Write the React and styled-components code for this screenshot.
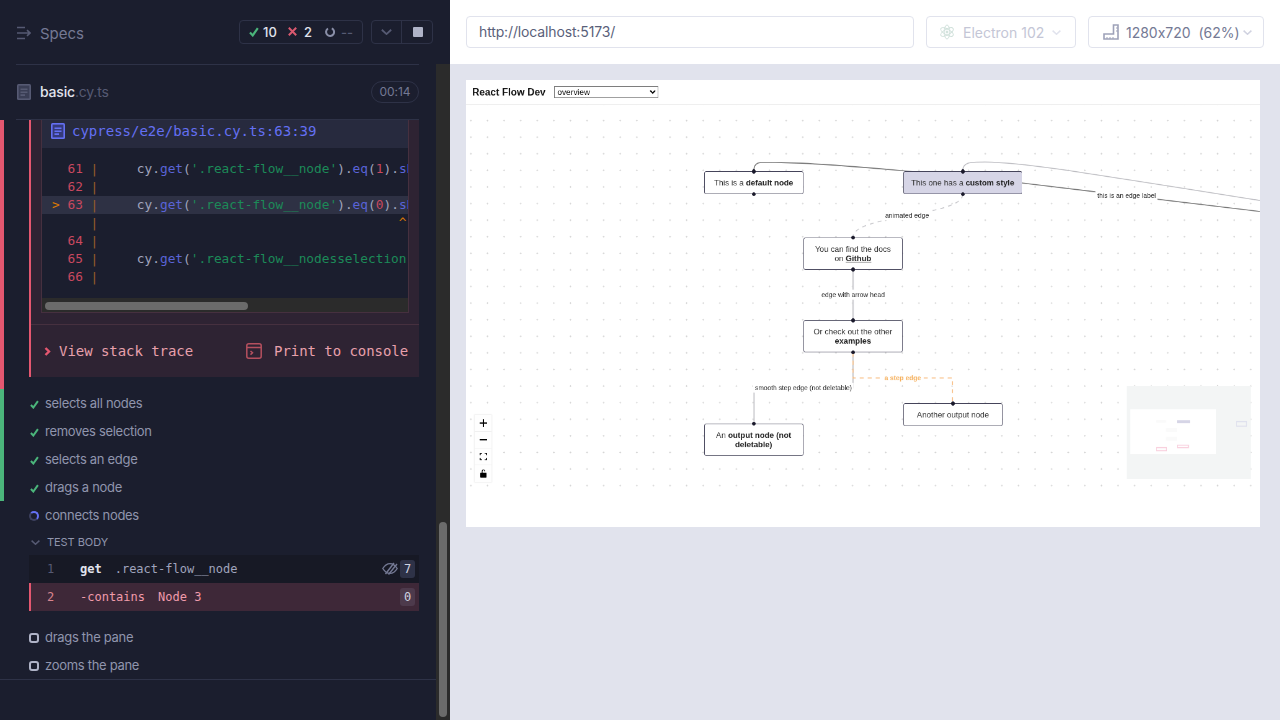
import React from 'react'
import styled, { createGlobalStyle } from 'styled-components'

const Global = createGlobalStyle`
	html, body { margin: 0; padding: 0; height: 100%; background: #1b1e2e; }
	* { box-sizing: border-box; }
	body { font-family: Inter, 'Noto Sans', sans-serif; font-feature-settings: 'calt' 0; overflow: hidden; }
`

const mono = `'DejaVu Sans Mono', 'Liberation Mono', monospace`
const line = '#2e3247'

const Shell = styled.div`
	display: flex;
	width: 1280px;
	height: 720px;
	overflow: hidden;
`

/* ---------- reporter (left) ---------- */
const Reporter = styled.aside`
	display: flex;
	flex-direction: column;
	width: 450px;
	height: 720px;
	background: #1b1e2e;
`
const TopBar = styled.header`
	display: flex;
	align-items: center;
	height: 64px;
	padding: 0 17px 0 17px;
	flex: none;
`
const SpecsLabel = styled.div`
	display: flex;
	align-items: center;
	gap: 9px;
	color: #747994;
	font-size: 15px;
	margin-right: auto;
	padding-top: 2px;
`
const Stats = styled.div`
	display: flex;
	align-items: center;
	height: 24px;
	width: 124px;
	padding-left: 9px;
	border: 1px solid ${line};
	border-radius: 4px;
	margin-right: 8px;
	margin-top: -1px;
	color: #e1e3ed;
	font-size: 13px;
	font-weight: 500;
`
const Stat = styled.span`
	display: flex;
	align-items: center;
	gap: ${p => p.$gap || 4}px;
	width: ${p => p.$w}px;
	color: ${p => p.$dim ? '#565a73' : 'inherit'};
`
const Controls = styled.div`
	display: flex;
	height: 24px;
	width: 62px;
	border: 1px solid ${line};
	border-radius: 4px;
	margin-top: -1px;
`
const ControlCell = styled.div`
	flex: 1;
	display: flex;
	align-items: center;
	justify-content: center;
	& + & { border-left: 1px solid ${line}; padding-left: 2px; }
`
const StopSquare = styled.div`
	width: 10px;
	height: 10px;
	border-radius: 1px;
	background: #afb3c7;
`
const Split = styled.div`
	flex: 1;
	display: flex;
	min-height: 0;
`
const Main = styled.div`
	width: 436px;
	display: flex;
	flex-direction: column;
`
const SpecRow = styled.div`
	display: flex;
	align-items: center;
	height: 56px;
	margin: 0 17px 0 16px;
	padding: 0 0 1px 1px;
	border-top: 1px solid ${line};
	border-bottom: 1px solid ${line};
	flex: none;
`
const SpecName = styled.div`
	margin-left: 9px;
	margin-right: auto;
	font-size: 14px;
	font-weight: 500;
	letter-spacing: -0.2px;
	color: #e1e3ed;
	span { color: #565a73; font-weight: 400; }
`
const Duration = styled.div`
	width: 48px;
	height: 22px;
	line-height: 20px;
	text-align: center;
	border: 1px solid ${line};
	border-radius: 11px;
	font-size: 12px;
	color: #747994;
`
const Group = styled.div`
	border-left: 4px solid ${p => p.$color};
	padding-left: 25px;
	padding-right: 17px;
`
const ErrorBlock = styled.div`
	width: 390px;
	height: 257px;
	margin-bottom: 12px;
	background: #2e2333;
	border-left: 2px solid #e45770;
	padding-left: 10px;
`
const Frame = styled.div`
	width: 368px;
	height: 193px;
	border: 1px solid #46303f;
	border-top: none;
	background: #1b1e2e;
	overflow: hidden;
`
const FrameHead = styled.div`
	display: flex;
	align-items: center;
	gap: 7px;
	height: 28px;
	padding: 0 0 6px 9px;
	background: #272a3e;
	color: #6470f3;
	font: 14px ${mono};
`
const Code = styled.div`
	height: 150px;
	padding: 12px 0;
	font: 12.8px/18px ${mono};
`
const Line = styled.div`
	height: 18px;
	padding-left: 10px;
	white-space: pre;
	color: #a0a4bd;
	background: ${p => p.$active ? '#2e3144' : 'transparent'};
`
const Tok = styled.span`
	color: ${p => ({ arrow: '#db7903', num: '#c9485f', pipe: '#9a5f2a', fn: '#5a64d8', str: '#1c8a58', lit: '#c9485f' }[p.$k])};
`
const HScroll = styled.div`
	height: 14px;
	padding: 4px 3px;
	background: #2b2b2b;
`
const HThumb = styled.div`
	width: 203px;
	height: 8px;
	border-radius: 4px;
	background: #6b6b6b;
`
const ErrorFoot = styled.div`
	display: flex;
	align-items: center;
	height: 53px;
	margin: 11px 0 0 -10px;
	padding: 0 0 0 13px;
	border-top: 1px solid #46303f;
	color: #e8a0ac;
	font: 14px ${mono};
	letter-spacing: -0.05px;
	white-space: nowrap;
`
const FootText = styled.span`
	margin-left: ${p => p.$m}px;
`
const FootSpacer = styled.div`
	width: 53px;
`
const TestRow = styled.div`
	display: flex;
	align-items: center;
	gap: 6px;
	height: 28px;
	padding-bottom: 1px;
	font-size: 13px;
	letter-spacing: -0.3px;
	color: #9095ad;
`
const IconBox = styled.span`
	display: flex;
	align-items: center;
	justify-content: center;
	width: 10px;
	height: 10px;
	flex: none;
	margin-top: 3px;
`
const Pending = styled.span`
	width: 10px;
	height: 10px;
	flex: none;
	margin-top: 3px;
	border: 2px solid #afb3c7;
	border-radius: 3px;
	background: #1b1e2e;
`
const Spinner = styled.span`
	width: 10px;
	height: 10px;
	flex: none;
	margin-top: 2px;
	border-radius: 50%;
	border: 2px solid #3d4160;
	border-top-color: #6470f3;
	border-right-color: #6470f3;
`
const BodyTitle = styled.div`
	display: flex;
	align-items: center;
	gap: 7px;
	height: 26px;
	padding-left: 2px;
	font-size: 11px;
	letter-spacing: -0.05px;
	color: #9095ad;
`
const Command = styled.div`
	display: flex;
	align-items: center;
	height: 28px;
	width: 390px;
	padding-right: 4px;
	padding-left: ${p => p.$failed ? 16 : 18}px;
	padding-bottom: 1px;
	border-left: ${p => p.$failed ? '2px solid #e45770' : 'none'};
	background: ${p => p.$failed ? '#3e2838' : '#171925'};
	font: 12px ${mono};
	white-space: pre;
	color: ${p => p.$failed ? '#f19bab' : '#a0a4bd'};
`
const CmdNum = styled.span`
	width: 33px;
	color: ${p => p.$failed ? '#d9848f' : '#565a73'};
`
const CmdName = styled.span`
	font-weight: 700;
	color: #e1e3ed;
	margin-right: 13px;
`
const CmdFail = styled.span`
	color: #f19bab;
	margin-right: 13px;
`
const Count = styled.span`
	display: flex;
	align-items: center;
	justify-content: center;
	width: 15px;
	height: 18px;
	margin-left: ${p => p.$auto ? 'auto' : '2px'};
	border-radius: 3px;
	background: ${p => p.$failed ? '#4d3a4c' : line};
	color: #d0d2e0;
`
const EyeWrap = styled.span`
	display: flex;
	margin-left: auto;
`
const AfterBody = styled.div`
	height: 12px;
`
const RunnerEnd = styled.div`
	height: 1px;
	background: ${line};
`
const Track = styled.div`
	width: 14px;
	display: flex;
	align-items: flex-end;
	justify-content: center;
	padding: 0 0 3px;
	background: #2b2b2b;
`
const Thumb = styled.div`
	width: 8px;
	height: 195px;
	border-radius: 4px;
	background: #6b6b6b;
`

/* ---------- preview (right) ---------- */
const Preview = styled.section`
	flex: 1;
	display: flex;
	flex-direction: column;
	background: #e1e3ed;
`
const UrlBar = styled.div`
	display: flex;
	gap: 12px;
	height: 64px;
	padding: 16px;
	background: #fff;
`
const UrlInput = styled.div`
	width: 448px;
	height: 32px;
	line-height: 30px;
	padding-left: 12px;
	border: 1px solid #e1e3ed;
	border-radius: 4px;
	font-size: 14px;
	letter-spacing: -0.14px;
	color: #5a5f7a;
`
const Picker = styled.div`
	display: flex;
	align-items: center;
	width: ${p => p.$w}px;
	height: 32px;
	padding-left: ${p => p.$pad}px;
	gap: ${p => p.$gap}px;
	border: 1px solid #e1e3ed;
	border-radius: 4px;
	font-size: 14px;
	color: ${p => p.$muted ? '#c4c6d6' : '#747994'};
	white-space: pre;
`
const Stage = styled.div`
	padding: 16px;
`
const AutBox = styled.div`
	width: 794px;
	height: 447px;
	background: #fff;
	overflow: hidden;
`
const Aut = styled.div`
	width: 1280px;
	height: 720px;
	transform: scale(0.6203);
	transform-origin: 0 0;
	will-change: transform;
	font-family: 'Liberation Sans', Arial, sans-serif;
	color: #222;
`
const AutHeader = styled.div`
	display: flex;
	align-items: center;
	height: 40px;
	padding-left: 10px;
	border-bottom: 1px solid #eee;
	font-size: 16px;
	font-weight: 700;
	color: #111;
	select {
		width: 168px;
		height: 19px;
		margin-left: 14px;
		font: 13.33px 'Liberation Sans', Arial, sans-serif;
		background: #fff;
	}
`
const Flow = styled.div`
	position: relative;
	width: 1280px;
	height: 618px;
	overflow: hidden;
	background-image: radial-gradient(circle at center, #d4d4d4 1px, transparent 1.1px);
	background-size: 26.75px 26.75px;
	background-position: -5.5px 12px;
`
const EdgeLayer = styled.svg`
	position: absolute;
	inset: 0;
	width: 1280px;
	height: 618px;
`
const Node = styled.div`
	position: absolute;
	left: ${p => p.$x}px;
	top: ${p => p.$y}px;
	width: ${p => p.$w || 160}px;
	padding: 10px;
	border: 1px solid #45445a;
	border-radius: 3px;
	background: ${p => p.$bg || '#fff'};
	font-size: 12.84px;
	line-height: 15px;
	text-align: center;
	color: #333;
	a { color: #222; font-weight: 700; }
	strong { color: #222; }
`
const Handle = styled.span`
	position: absolute;
	left: 50%;
	${p => p.$side}: -4px;
	width: 6.4px;
	height: 6.4px;
	margin-left: -3.2px;
	border-radius: 50%;
	background: #1a192b;
	border: 1px solid #1a192b;
`
const EdgeLabel = styled.div`
	position: absolute;
	left: ${p => p.$x}px;
	top: ${p => p.$y}px;
	transform: translate(-50%, -50%);
	padding: 2px 3px;
	background: #fff;
	font-size: 10.7px;
	line-height: 12px;
	white-space: nowrap;
	color: ${p => p.$color || '#222'};
	font-weight: ${p => p.$color ? 700 : 400};
`
const ZoomControls = styled.div`
	position: absolute;
	left: 14px;
	bottom: 10px;
	width: 27px;
	box-shadow: 0 0 2px 1px rgba(0, 0, 0, 0.08);
`
const ZoomButton = styled.div`
	display: flex;
	align-items: center;
	justify-content: center;
	height: 27px;
	background: #fefefe;
	border-bottom: 1px solid #eee;
	&:last-child { border-bottom: none; }
`
const MiniMap = styled.svg`
	position: absolute;
	right: 15px;
	bottom: 15px;
	width: 200px;
	height: 150px;
`

/* ---------- icons ---------- */
const SpecsIcon = () => (
	<svg width="14" height="14" viewBox="0 0 14 14" fill="none" stroke="#565a73" strokeWidth="1.6">
		<path d="M0 1.5h8M0 7h12.5M0 12.5h8M10 4.2 13 7l-3 2.8" />
	</svg>
)
const DocIcon = ({ color = '#565a73', ink = '#3a3e55' }) => (
	<svg width="14" height="16" viewBox="0 0 14 16" fill="none">
		<rect width="14" height="16" rx="1.5" fill={color} />
		<rect x="1.6" y="1.6" width="10.8" height="12.8" fill={ink} />
		<path d="M3.5 4.5h7v1.6h-7zM3.5 7.4h7V9h-7zM3.5 10.3h4.5v1.6H3.5z" fill={color} />
	</svg>
)
const Check = ({ size = 10 }) => (
	<svg width={size} height={size} viewBox="0 0 10 10" fill="none" stroke="#4bb57b" strokeWidth="2.2">
		<path d="M1 5.6 3.7 8.4 8.8 1.2" />
	</svg>
)
const Cross = () => (
	<svg width="9" height="9" viewBox="0 0 9 9" fill="none" stroke="#d9596f" strokeWidth="2">
		<path d="M.8.8l7.4 7.4M8.2.8.8 8.2" />
	</svg>
)
const Ring = () => (
	<svg width="10" height="10" viewBox="0 0 10 10" fill="none" stroke="#8a8fa8" strokeWidth="2">
		<path d="M6.8 1.3A4 4 0 1 1 3 1.5" />
	</svg>
)
const Chevron = ({ color, w = 9, h = 5 }) => (
	<svg width={w} height={h} viewBox="0 0 9 5" fill="none" stroke={color} strokeWidth="1.5">
		<path d="M.6.6 4.5 4.2 8.4.6" />
	</svg>
)
const RedArrow = () => (
	<svg width="7" height="9" viewBox="0 0 7 9" fill="none" stroke="#e45770" strokeWidth="2.4">
		<path d="M1.5 1 5 4.5 1.5 8" />
	</svg>
)
const ConsoleIcon = () => (
	<svg width="16" height="16" viewBox="0 0 16 16" fill="none" stroke="#b5505f" strokeWidth="1.5">
		<rect x=".8" y=".8" width="14.4" height="14.4" rx="2" />
		<path d="M.8 4.5h14.4M4.5 8l2 1.8-2 1.8" />
	</svg>
)
const EyeOff = () => (
	<svg width="16" height="13" viewBox="0 0 16 13" fill="none" stroke="#747994" strokeWidth="1.4">
		<path d="M.8 6.5C3 3 5.5 1.6 8 1.6s5 1.4 7.2 4.9C13 10 10.5 11.4 8 11.4S3 10 .8 6.5Z" />
		<path d="M3.5 12 12 1M6.5 12.5 15 2" />
	</svg>
)
const ElectronIcon = () => (
	<svg width="16" height="16" viewBox="0 0 16 16" fill="none" stroke="#cfe0da" strokeWidth="0.9">
		<ellipse cx="8" cy="8" rx="7" ry="2.8" transform="rotate(30 8 8)" />
		<ellipse cx="8" cy="8" rx="7" ry="2.8" transform="rotate(-30 8 8)" />
		<ellipse cx="8" cy="8" rx="2.8" ry="7" />
		<circle cx="8" cy="8" r="1" fill="#cfe0da" />
	</svg>
)
const RulerIcon = () => (
	<svg width="16" height="16" viewBox="0 0 16 16" fill="none" stroke="#9ea2b9" strokeWidth="1.6">
		<path d="M10.5 1h4.5v14H1v-5h9.5Z" />
		<path d="M4 15v-2M7 15v-2M10 15v-2M15 4h-2M15 7h-2" strokeWidth="1" />
	</svg>
)

const LineNum = ({ n, arrow }) => (
	<>
		<Tok $k="arrow">{arrow ? '>' : ' '}</Tok>{' '}
		<Tok $k="num">{n || '  '}</Tok>{' '}
		<Tok $k="pipe">|</Tok>
	</>
)
const GetCall = ({ arg, lit }) => (
	<>
		{'     cy.'}<Tok $k="fn">get</Tok>(<Tok $k="str">{arg}</Tok>)
		{lit && <>.<Tok $k="fn">eq</Tok>(<Tok $k="lit">{lit}</Tok>).<Tok $k="fn">should</Tok></>}
	</>
)

const passed = ['selects all nodes', 'removes selection', 'selects an edge', 'drags a node']

export default function App() {
	return (
		<Shell>
			<Global />
			<Reporter>
				<TopBar>
					<SpecsLabel><SpecsIcon />Specs</SpecsLabel>
					<Stats>
						<Stat $w={39}><Check />10</Stat>
						<Stat $w={37} $gap={7}><Cross />2</Stat>
						<Stat $w={30} $gap={6} $dim><Ring />--</Stat>
					</Stats>
					<Controls>
						<ControlCell><Chevron color="#565a73" w={11} h={6} /></ControlCell>
						<ControlCell><StopSquare /></ControlCell>
					</Controls>
				</TopBar>
				<Split>
					<Main>
						<SpecRow>
							<DocIcon />
							<SpecName>basic<span>.cy.ts</span></SpecName>
							<Duration>00:14</Duration>
						</SpecRow>
						<Group $color="#e45770">
							<ErrorBlock>
								<Frame>
									<FrameHead>
										<DocIcon color="#6470f3" ink="#353a7a" />
										cypress/e2e/basic.cy.ts:63:39
									</FrameHead>
									<Code>
										<Line><LineNum n="61" /><GetCall arg="'.react-flow__node'" lit="1" /></Line>
										<Line><LineNum n="62" /></Line>
										<Line $active><LineNum n="63" arrow /><GetCall arg="'.react-flow__node'" lit="0" /></Line>
										<Line><LineNum />{' '.repeat(39)}<Tok $k="arrow">^</Tok></Line>
										<Line><LineNum n="64" /></Line>
										<Line><LineNum n="65" /><GetCall arg="'.react-flow__nodesselection-rect'" /></Line>
										<Line><LineNum n="66" /></Line>
									</Code>
									<HScroll><HThumb /></HScroll>
								</Frame>
								<ErrorFoot>
									<RedArrow />
									<FootText $m={8}>View stack trace</FootText>
									<FootSpacer />
									<ConsoleIcon />
									<FootText $m={12}>Print to console</FootText>
								</ErrorFoot>
							</ErrorBlock>
						</Group>
						<Group $color="#4bb57b">
							{passed.map(name => (
								<TestRow key={name}><IconBox><Check size={9} /></IconBox>{name}</TestRow>
							))}
						</Group>
						<Group $color="transparent">
							<TestRow><Spinner />connects nodes</TestRow>
							<BodyTitle><Chevron color="#565a73" />TEST BODY</BodyTitle>
							<Command>
								<CmdNum>1</CmdNum>
								<CmdName>get</CmdName>
								.react-flow__node
								<EyeWrap><EyeOff /></EyeWrap>
								<Count>7</Count>
							</Command>
							<Command $failed>
								<CmdNum $failed>2</CmdNum>
								<CmdFail>-contains</CmdFail>
								Node 3
								<Count $auto $failed>0</Count>
							</Command>
							<AfterBody />
							<TestRow><Pending />drags the pane</TestRow>
							<TestRow><Pending />zooms the pane</TestRow>
						</Group>
						<RunnerEnd />
					</Main>
					<Track><Thumb /></Track>
				</Split>
			</Reporter>

			<Preview>
				<UrlBar>
					<UrlInput>http://localhost:5173/</UrlInput>
					<Picker $w={150} $pad={12} $gap={8} $muted>
						<ElectronIcon />Electron 102<Chevron color="#e1e3ed" />
					</Picker>
					<Picker $w={176} $pad={14} $gap={3}>
						<RulerIcon /> 1280x720  (62%)<Chevron color="#d0d2e0" />
					</Picker>
				</UrlBar>
				<Stage>
					<AutBox>
						<Aut>
							<AutHeader>
								React Flow Dev
								<select defaultValue="overview"><option>overview</option></select>
							</AutHeader>
							<Flow>
								<EdgeLayer viewBox="466 104.8 794 383.4" fill="none">
									<path d="M753.8 171C753.8 160 762 162.5 775 162.5C830 162.5 960 176 1022 183L1260 211.5" stroke="#777" strokeWidth="1" />
									<path d="M962.7 171C962.7 162 970 162 985 162C1020 162.5 1050 167 1260 200.5" stroke="#bdbdc2" strokeWidth="1" />
									<path d="M962.7 194.5C962.7 216 853 215 853 237" stroke="#c8c8cc" strokeWidth="1" strokeDasharray="4" />
									<path d="M853 270V320" stroke="#d0d0d4" strokeWidth="1.6" />
									<path d="M853 352.7V388H754V423" stroke="#b8b8bd" strokeWidth="1" />
									<path d="M853 352.7V378H952.5V403" stroke="#f8bd82" strokeWidth="1" strokeDasharray="4" />
								</EdgeLayer>
								<Node $x={383.7} $y={107.2}>
									<Handle $side="top" />
									This is a <strong>default node</strong>
									<Handle $side="bottom" />
								</Node>
								<Node $x={705} $y={107.2} $w={191.5} $bg="#d6d5e6">
									<Handle $side="top" />
									This one has a <strong>custom style</strong>
									<Handle $side="bottom" />
								</Node>
								<Node $x={543.8} $y={213.6}>
									<Handle $side="top" />
									You can find the docs on <a href="#">Github</a>
									<Handle $side="bottom" />
								</Node>
								<Node $x={543.8} $y={347.4}>
									<Handle $side="top" />
									Or check out the other <strong>examples</strong>
									<Handle $side="bottom" />
								</Node>
								<Node $x={705} $y={481.2}>
									<Handle $side="top" />
									Another output node
								</Node>
								<Node $x={383.7} $y={513.5}>
									<Handle $side="top" />
									An <strong>output node (not deletable)</strong>
								</Node>
								<EdgeLabel $x={1065} $y={145.5}>this is an edge label</EdgeLabel>
								<EdgeLabel $x={711} $y={178}>animated edge</EdgeLabel>
								<EdgeLabel $x={624} $y={306}>edge with arrow head</EdgeLabel>
								<EdgeLabel $x={544} $y={455.5}>smooth step edge (not deletable)</EdgeLabel>
								<EdgeLabel $x={704} $y={440} $color="#f6ad55">a step edge</EdgeLabel>
								<ZoomControls>
									<ZoomButton>
										<svg width="12" height="12" viewBox="0 0 12 12" fill="#000"><path d="M5 0h2v5h5v2H7v5H5V7H0V5h5z" /></svg>
									</ZoomButton>
									<ZoomButton>
										<svg width="12" height="2" viewBox="0 0 12 2" fill="#000"><path d="M0 0h12v2H0z" /></svg>
									</ZoomButton>
									<ZoomButton>
										<svg width="12" height="12" viewBox="0 0 12 12" fill="none" stroke="#000" strokeWidth="1.6">
											<path d="M.8 4V.8H4M8 .8h3.2V4M11.2 8v3.2H8M4 11.2H.8V8" />
										</svg>
									</ZoomButton>
									<ZoomButton>
										<svg width="10" height="13" viewBox="0 0 10 13" fill="#000">
											<path d="M1 5h8a1 1 0 0 1 1 1v6a1 1 0 0 1-1 1H1a1 1 0 0 1-1-1V6a1 1 0 0 1 1-1Z" />
											<path d="M3 5V2.5a2 2 0 0 1 4 0V3" fill="none" stroke="#000" strokeWidth="1.2" />
										</svg>
									</ZoomButton>
								</ZoomControls>
								<MiniMap viewBox="1126.7 386.7 124 93">
									<rect x="1126.7" y="386.7" width="124" height="93" fill="#f3f5f5" />
									<rect x="1130.3" y="410" width="85.7" height="45" fill="#fff" />
									<rect x="1156" y="421" width="10" height="2.5" fill="#fafafa" />
									<rect x="1177" y="421" width="13" height="3" fill="#d6d5e6" />
									<rect x="1166" y="429" width="11" height="3.5" fill="#fafafa" />
									<rect x="1166" y="438" width="11" height="3.5" fill="#fafafa" />
									<rect x="1156.5" y="448.5" width="10" height="3" fill="none" stroke="#f9cfdd" />
									<rect x="1177.5" y="446" width="11" height="2.5" fill="none" stroke="#f9cfdd" />
									<rect x="1236.5" y="422.5" width="10" height="4.5" fill="none" stroke="#dfe1ee" />
								</MiniMap>
							</Flow>
						</Aut>
					</AutBox>
				</Stage>
			</Preview>
		</Shell>
	)
}
